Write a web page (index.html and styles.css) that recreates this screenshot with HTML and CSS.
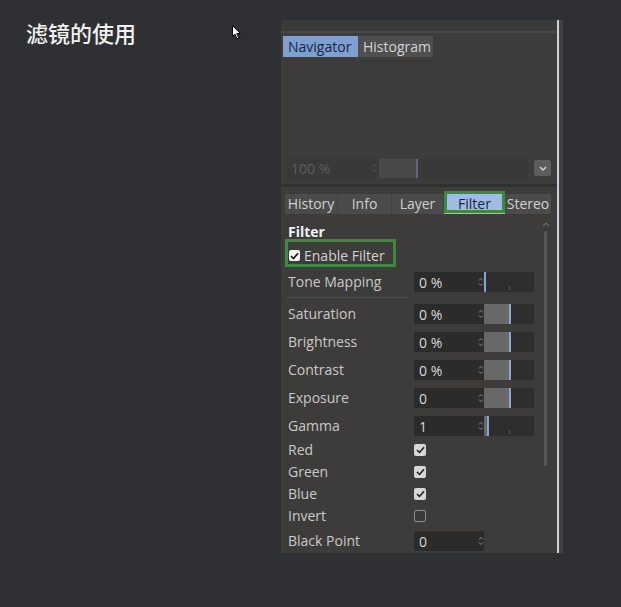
FILE: index.html
```html
<!DOCTYPE html>
<html>
<head>
<meta charset="utf-8">
<link rel="stylesheet" href="styles.css">
</head>
<body>
<div class="page">
  <h1 class="title">滤镜的使用</h1>
  <svg class="cursor" width="10" height="15" viewBox="0 0 10 15"><path d="M0.5 0.5 L0.5 11.5 L3 9 L5 13.8 L6.8 13 L4.8 8.5 L8.3 8.5 Z" fill="#fff" stroke="#000" stroke-width="1"/></svg>
  <div class="panel-wrap">
    <div class="panel">
      <div class="topstrip"></div>
      <div class="nav">
        <div class="navtabs">
          <span class="ntab active">Navigator</span>
          <span class="ntab">Histogram</span>
        </div>
        <div class="navview"></div>
        <div class="zoomrow">
          <div class="zfield">
            <span class="ztext">100 %</span>
            <svg class="spin zspin" width="6" height="10" viewBox="0 0 6 10"><path d="M1 3.5 L3 1.5 L5 3.5 M1 6.5 L3 8.5 L5 6.5" fill="none" stroke="currentColor" stroke-width="1"/></svg>
            <div class="zslider"><div class="zfill"></div><div class="zthumb"></div></div>
          </div>
          <div class="dropbtn"><svg width="8" height="5" viewBox="0 0 8 5"><path d="M1 1 L4 4 L7 1" fill="none" stroke="#d8d8d8" stroke-width="1.3"/></svg></div>
        </div>
      </div>
      <div class="sep"></div>
      <div class="attr">
        <div class="atabs">
          <span class="atab w-history">History</span>
          <span class="atab w-info">Info</span>
          <span class="atab w-layer">Layer</span>
          <span class="atab w-filter active">Filter</span>
          <span class="atab w-stereo">Stereo</span>
        </div>
        <div class="body">
          <div class="props">
            <div class="heading">Filter</div>
            <div class="enable">
              <span class="cb white"><svg width="9" height="8" viewBox="0 0 9 8"><path d="M1 4 L3.5 6.5 L8 1.2" fill="none" stroke="#111" stroke-width="1.6"/></svg></span>
              <span>Enable Filter</span>
            </div>
            <div class="row first">
              <span class="label">Tone Mapping</span>
              <div class="field">
                <span class="num">0 %</span>
                <svg class="spin" width="6" height="10" viewBox="0 0 6 10"><path d="M1 3.5 L3 1.5 L5 3.5 M1 6.5 L3 8.5 L5 6.5" fill="none" stroke="currentColor" stroke-width="1"/></svg>
                <div class="slider"><div class="fill" style="width:0px"></div><div class="thumb"></div><div class="tick"></div></div>
              </div>
            </div>
            <div class="hline"></div>
            <div class="row">
              <span class="label">Saturation</span>
              <div class="field">
                <span class="num">0 %</span>
                <svg class="spin" width="6" height="10" viewBox="0 0 6 10"><path d="M1 3.5 L3 1.5 L5 3.5 M1 6.5 L3 8.5 L5 6.5" fill="none" stroke="currentColor" stroke-width="1"/></svg>
                <div class="slider"><div class="fill" style="width:25px"></div><div class="thumb"></div></div>
              </div>
            </div>
            <div class="row">
              <span class="label">Brightness</span>
              <div class="field">
                <span class="num">0 %</span>
                <svg class="spin" width="6" height="10" viewBox="0 0 6 10"><path d="M1 3.5 L3 1.5 L5 3.5 M1 6.5 L3 8.5 L5 6.5" fill="none" stroke="currentColor" stroke-width="1"/></svg>
                <div class="slider"><div class="fill" style="width:25px"></div><div class="thumb"></div></div>
              </div>
            </div>
            <div class="row">
              <span class="label">Contrast</span>
              <div class="field">
                <span class="num">0 %</span>
                <svg class="spin" width="6" height="10" viewBox="0 0 6 10"><path d="M1 3.5 L3 1.5 L5 3.5 M1 6.5 L3 8.5 L5 6.5" fill="none" stroke="currentColor" stroke-width="1"/></svg>
                <div class="slider"><div class="fill" style="width:25px"></div><div class="thumb"></div></div>
              </div>
            </div>
            <div class="row">
              <span class="label">Exposure</span>
              <div class="field">
                <span class="num">0</span>
                <svg class="spin" width="6" height="10" viewBox="0 0 6 10"><path d="M1 3.5 L3 1.5 L5 3.5 M1 6.5 L3 8.5 L5 6.5" fill="none" stroke="currentColor" stroke-width="1"/></svg>
                <div class="slider"><div class="fill" style="width:25px"></div><div class="thumb"></div></div>
              </div>
            </div>
            <div class="row">
              <span class="label">Gamma</span>
              <div class="field">
                <span class="num">1</span>
                <svg class="spin" width="6" height="10" viewBox="0 0 6 10"><path d="M1 3.5 L3 1.5 L5 3.5 M1 6.5 L3 8.5 L5 6.5" fill="none" stroke="currentColor" stroke-width="1"/></svg>
                <div class="slider"><div class="fill" style="width:3px"></div><div class="thumb"></div><div class="tick"></div></div>
              </div>
            </div>
            <div class="crow">
              <span class="label">Red</span>
              <span class="cb on"><svg width="9" height="8" viewBox="0 0 9 8"><path d="M1 4 L3.5 6.5 L8 1.2" fill="none" stroke="#1a1a1a" stroke-width="1.5"/></svg></span>
            </div>
            <div class="crow">
              <span class="label">Green</span>
              <span class="cb on"><svg width="9" height="8" viewBox="0 0 9 8"><path d="M1 4 L3.5 6.5 L8 1.2" fill="none" stroke="#1a1a1a" stroke-width="1.5"/></svg></span>
            </div>
            <div class="crow">
              <span class="label">Blue</span>
              <span class="cb on"><svg width="9" height="8" viewBox="0 0 9 8"><path d="M1 4 L3.5 6.5 L8 1.2" fill="none" stroke="#1a1a1a" stroke-width="1.5"/></svg></span>
            </div>
            <div class="crow">
              <span class="label">Invert</span>
              <span class="cb off"></span>
            </div>
            <div class="row last">
              <span class="label">Black Point</span>
              <div class="field short">
                <span class="num">0</span>
                <svg class="spin" width="6" height="10" viewBox="0 0 6 10"><path d="M1 3.5 L3 1.5 L5 3.5 M1 6.5 L3 8.5 L5 6.5" fill="none" stroke="currentColor" stroke-width="1"/></svg>
              </div>
            </div>
          </div>
          <div class="scroll">
            <svg width="8" height="5" viewBox="0 0 8 5"><path d="M1 4 L4 1 L7 4" fill="none" stroke="#6a6a6a" stroke-width="1.2"/></svg>
            <div class="track"></div>
          </div>
        </div>
      </div>
    </div>
    <div class="edge-line"></div>
    <div class="edge-strip"></div>
  </div>
</div>
</body>
</html>
```
FILE: styles.css
```css
html, body {
  margin: 0;
  padding: 0;
  background: #2f3034;
  width: 621px;
  height: 607px;
  overflow: hidden;
}
.page {
  position: relative;
  display: flex;
  align-items: flex-start;
  padding: 20px 0 0 26px;
  font-family: "Open Sans", "Noto Sans", sans-serif;
  font-size: 14px;
}
.title {
  width: 255px;
  flex: none;
  margin: 0;
  padding-top: 0;
  font-family: "Noto Sans CJK SC", sans-serif;
  font-weight: 500;
  font-size: 22px;
  line-height: 24px;
  color: #f2f2f2;
}
.cursor {
  position: absolute;
  left: 232px;
  top: 25px;
}
.panel-wrap {
  display: flex;
  height: 533px;
}
.panel {
  width: 276px;
  background: #3d3c3a;
  display: flex;
  flex-direction: column;
  overflow: hidden;
}
.edge-line {
  width: 2px;
  background: #cfcfd1;
}
.edge-strip {
  width: 4px;
  background: #404145;
}
.topstrip {
  height: 11px;
  background: #3a3a39;
  border-bottom: 2px solid #48484a;
}
.nav {
  padding: 3px 0 6px 2px;
}
.navtabs {
  display: flex;
  height: 21px;
}
.ntab {
  width: 75px;
  box-sizing: border-box;
  padding-left: 5px;
  line-height: 21px;
  background: #4f4f4f;
  color: #d2d2d2;
}
.ntab.active {
  background: #7f9fcf;
  color: #172647;
}
.navview {
  height: 101px;
}
.zoomrow {
  display: flex;
  align-items: center;
  height: 20px;
  padding-left: 4px;
  gap: 6px;
}
.zfield {
  width: 241px;
  height: 19px;
  background: #393937;
  border-radius: 2px;
  display: flex;
  align-items: center;
}
.ztext {
  width: 81px;
  padding-left: 4px;
  color: #5e5e5c;
}
.spin {
  color: #8a8a8a;
  flex: none;
}
.zspin {
  color: #5c5c5c;
}
.zslider {
  margin-left: 1px;
  flex: 1;
  height: 19px;
  display: flex;
}
.zfill {
  width: 37px;
  background: #494947;
}
.zthumb {
  width: 2px;
  background: #5f6879;
}
.dropbtn {
  width: 17px;
  height: 16px;
  background: #5d5d5d;
  border-radius: 2px;
  display: flex;
  align-items: center;
  justify-content: center;
}
.sep {
  height: 3px;
  background: #303030;
}
.attr {
  flex: 1;
  padding: 7px 6px 0 4px;
}
.atabs {
  display: flex;
  height: 20px;
  background: #4b4b4b;
  border-radius: 2px;
}
.atab {
  box-sizing: border-box;
  text-align: center;
  line-height: 20px;
  color: #d0d0d0;
  border-right: 1px solid #424242;
  white-space: nowrap;
  overflow: hidden;
}
.w-history { width: 53px; }
.w-info { width: 54px; }
.w-layer { width: 52px; }
.w-filter { width: 61px; }
.w-stereo { width: 46px; border-right: none; }
.atab.active {
  position: relative;
  background: #a0bbe4;
  color: #18253f;
  overflow: visible;
  border-right: none;
}
.atab.active::after {
  content: "";
  position: absolute;
  left: 0;
  right: 0;
  top: -3px;
  bottom: 1px;
  border: 3px solid #3e8a3c;
}
.body {
  display: flex;
}
.props {
  flex: 1;
  padding-left: 3px;
}
.heading {
  margin-top: 11px;
  height: 14px;
  line-height: 14px;
  font-weight: 700;
  color: #f2f2f2;
}
.enable {
  display: inline-flex;
  align-items: center;
  gap: 4px;
  box-sizing: border-box;
  height: 28px;
  width: 111px;
  margin-left: -3px;
  padding: 5px 0 0 1px;
  border: 3px solid #3e8a3c;
  color: #d2d2d2;
}
.cb {
  width: 12px;
  height: 12px;
  border-radius: 2px;
  box-sizing: border-box;
  display: inline-flex;
  align-items: center;
  justify-content: center;
  flex: none;
}
.cb.white {
  background: #f4f4f4;
  width: 11px;
  height: 11px;
}
.cb.on {
  background: #d6d6d6;
}
.cb.off {
  border: 1px solid #8c8c8c;
  background: #3a3a38;
}
.row {
  display: flex;
  align-items: center;
  height: 20px;
  margin-top: 8px;
}
.row.first {
  margin-top: 5px;
}
.row.last {
  margin-top: 4px;
}
.label {
  width: 126px;
  flex: none;
  color: #c9c9c9;
  padding-bottom: 2px;
}
.field {
  width: 120px;
  height: 20px;
  border-radius: 2px;
  background: #2b2b2b;
  display: flex;
  align-items: center;
  overflow: hidden;
}
.field.short {
  width: 70px;
}
.num {
  box-sizing: border-box;
  width: 64px;
  flex: none;
  padding-left: 5px;
  color: #d8d8d8;
}
.slider {
  position: relative;
  flex: none;
  width: 50px;
  height: 20px;
  display: flex;
  background: #2e2e2e;
}
.fill {
  background: #686868;
}
.thumb {
  width: 2px;
  background: #86a5d6;
}
.tick {
  position: absolute;
  left: 25px;
  bottom: 2px;
  width: 1px;
  height: 4px;
  background: #555;
}
.hline {
  height: 1px;
  width: 121px;
  margin: 5px 0 0 -1px;
  background: #4d4d4b;
}
.hline + .row {
  margin-top: 6px;
}
.crow {
  display: flex;
  align-items: center;
  height: 22px;
}
.row + .crow {
  margin-top: 3px;
}
.scroll {
  width: 12px;
  display: flex;
  flex-direction: column;
  align-items: center;
  padding-top: 8px;
}
.scroll svg {
  margin-left: 1px;
}
.track {
  margin-top: 4px;
  width: 3px;
  height: 235px;
  background: #555554;
  border-radius: 1px;
}
```
